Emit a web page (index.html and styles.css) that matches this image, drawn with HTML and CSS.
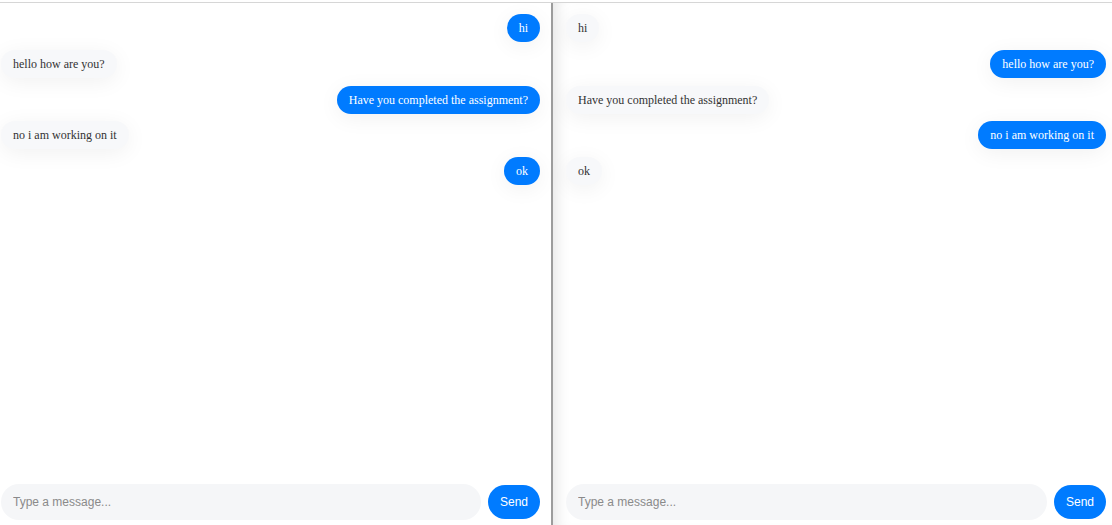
FILE: index.html
```html
<!DOCTYPE html>
<html lang="en">
<head>
<meta charset="utf-8">
<title>Chat</title>
<link rel="stylesheet" href="styles.css">
</head>
<body>
<div class="app">
  <section class="pane pane-left">
    <div class="messages">
      <div class="msg sent">hi</div>
      <div class="msg received">hello how are you?</div>
      <div class="msg sent">Have you completed the assignment?</div>
      <div class="msg received">no i am working on it</div>
      <div class="msg sent">ok</div>
    </div>
    <form class="composer">
      <input class="composer-input" type="text" placeholder="Type a message...">
      <button class="send-btn" type="button">Send</button>
    </form>
  </section>
  <section class="pane pane-right">
    <div class="messages">
      <div class="msg received">hi</div>
      <div class="msg sent">hello how are you?</div>
      <div class="msg received">Have you completed the assignment?</div>
      <div class="msg sent">no i am working on it</div>
      <div class="msg received">ok</div>
    </div>
    <form class="composer">
      <input class="composer-input" type="text" placeholder="Type a message...">
      <button class="send-btn" type="button">Send</button>
    </form>
  </section>
</div>
</body>
</html>
```

FILE: styles.css
```css
* { box-sizing: border-box; }

html, body {
  margin: 0;
  padding: 0;
  background: #ffffff;
  overflow: hidden;
}

body {
  padding-top: 2px;
  font-family: "Liberation Serif", "Times New Roman", serif;
}

.app {
  display: flex;
  height: 523px;
  border-top: 1px solid #d6d6d6;
}

.pane {
  display: flex;
  flex-direction: column;
  min-width: 0;
}

.pane-left {
  width: 551px;
  flex: none;
  padding: 11px 11px 5px 1px;
}

.pane-right {
  flex: 1;
  border-left: 2px solid #9c9c9c;
  padding: 11px 6px 5px 13px;
  box-shadow: inset 14px 0 14px -10px rgba(0, 0, 0, 0.10);
}

.messages {
  flex: 1;
  display: flex;
  flex-direction: column;
  align-items: flex-start;
  gap: 7.75px;
}

.msg {
  font-size: 12px;
  line-height: 14px;
  padding: 7px 12px;
  border-radius: 16px;
  box-shadow: 0 4px 22px rgba(0, 0, 0, 0.06);
  white-space: nowrap;
}

.msg.sent {
  align-self: flex-end;
  background: #007bff;
  color: #ffffff;
}

.msg.received {
  background: #f7f8fa;
  color: #333333;
}

.composer {
  display: flex;
  align-items: center;
  gap: 7px;
  margin: 0;
}

.composer-input {
  flex: 1;
  min-width: 0;
  height: 36px;
  border: none;
  outline: none;
  border-radius: 18px;
  background: #f5f6f8;
  padding: 0 12px;
  font-family: "Liberation Sans", Arial, sans-serif;
  font-size: 12px;
  color: #333;
}

.composer-input::placeholder {
  color: #8a8a8a;
}

.send-btn {
  height: 34px;
  padding: 0 12px;
  border: none;
  border-radius: 17px;
  background: #007bff;
  color: #ffffff;
  font-family: "Liberation Sans", Arial, sans-serif;
  font-size: 12px;
}
```
